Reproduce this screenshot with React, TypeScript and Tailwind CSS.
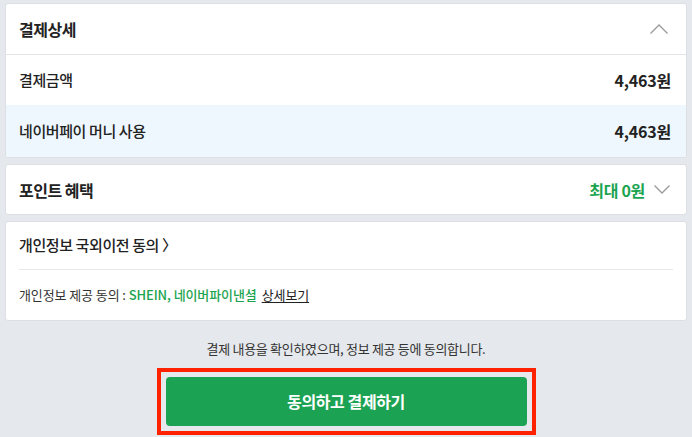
import React from 'react';

const font = { fontFamily: '"Noto Sans CJK KR", "Noto Sans", sans-serif' };

function ChevronUp() {
  return (
    <svg width="20" height="12" viewBox="0 0 20 12" fill="none">
      <path d="M1.5 10.5 L10 2 L18.5 10.5" stroke="#9a9a9a" strokeWidth="1.3" />
    </svg>
  );
}

function ChevronDown() {
  return (
    <svg width="18" height="11" viewBox="0 0 18 11" fill="none">
      <path d="M1.5 1.5 L9 9 L16.5 1.5" stroke="#9a9a9a" strokeWidth="1.3" />
    </svg>
  );
}

export default function App() {
  return (
    <div className="h-[437px] overflow-hidden bg-[#e5e8ec] px-[5px] pt-[3px] text-[#222]" style={font}>
      {/* 결제상세 */}
      <div className="rounded-[3px] border border-[#dcdfe3] bg-white overflow-hidden">
        <div className="flex h-[51px] items-center justify-between border-b border-[#e3e5e8] pl-[13px] pr-[17px]">
          <span className="text-[16px] font-bold tracking-[-0.5px]">결제상세</span>
          <ChevronUp />
        </div>
        <div className="flex h-[50px] items-center justify-between pl-[13px] pr-[15px]">
          <span className="text-[15px] font-medium tracking-[-0.4px]">결제금액</span>
          <span className="text-[16px] font-bold tracking-[-0.2px]">4,463원</span>
        </div>
        <div className="flex h-[52px] items-center justify-between bg-[#edf7fd] pl-[13px] pr-[15px]">
          <span className="text-[15px] font-medium tracking-[-0.4px]">네이버페이 머니 사용</span>
          <span className="text-[16px] font-bold tracking-[-0.2px]">4,463원</span>
        </div>
      </div>

      {/* 포인트 혜택 */}
      <div className="mt-[6px] flex h-[51px] items-center justify-between rounded-[3px] border border-[#dcdfe3] bg-white pl-[13px] pr-[15px]">
        <span className="text-[16px] font-bold tracking-[-0.5px]">포인트 혜택</span>
        <div className="flex items-center gap-[8px]">
          <span className="text-[16px] font-bold tracking-[-0.3px] text-[#1ca451]">최대 0원</span>
          <ChevronDown />
        </div>
      </div>

      {/* 개인정보 */}
      <div className="mt-[6px] rounded-[3px] border border-[#dcdfe3] bg-white px-[13px]">
        <div className="flex h-[48px] items-center border-b border-[#e6e8eb]">
          <span className="text-[15px] font-medium tracking-[-0.4px]">개인정보 국외이전 동의 〉</span>
        </div>
        <div className="flex h-[50px] items-center text-[13px] tracking-[-0.1px]">
          <span className="text-[#333]">개인정보 제공 동의 :&nbsp;</span>
          <span className="font-medium text-[#1ca451]">SHEIN, 네이버파이낸셜</span>
          <span className="ml-[5px] text-[#222] underline underline-offset-2">상세보기</span>
        </div>
      </div>

      {/* 동의 */}
      <div className="mt-[18px] text-center text-[13px] tracking-[-0.3px] text-[#333]">
        결제 내용을 확인하였으며, 정보 제공 등에 동의합니다.
      </div>
      <div className="mt-[9px] flex justify-center">
        <div className="border-4 border-[#ff2200] p-[5px]">
          <button className="flex h-[49px] w-[361px] items-center justify-center rounded-[4px] bg-[#1ba253] text-[16px] font-bold tracking-[-0.4px] text-white">
            동의하고 결제하기
          </button>
        </div>
      </div>
    </div>
  );
}
